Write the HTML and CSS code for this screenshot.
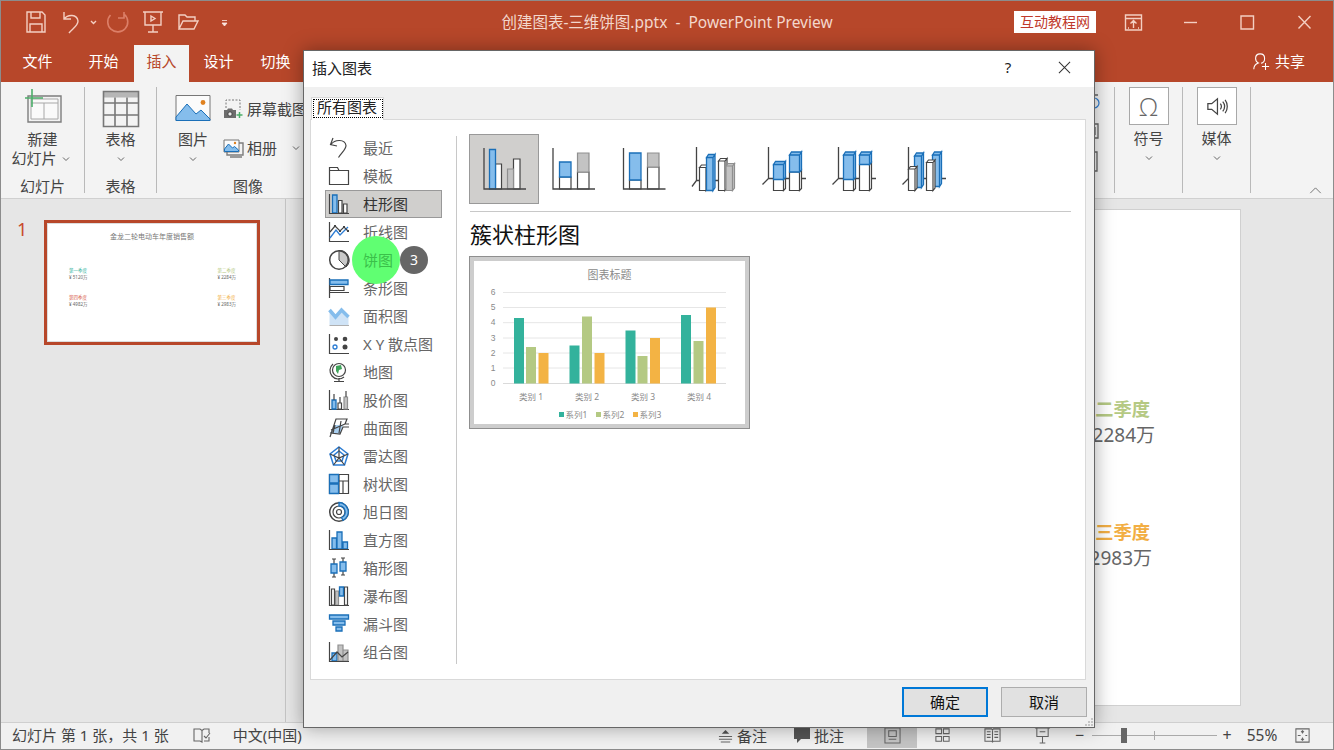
FILE: index.html
```html
<!DOCTYPE html>
<html lang="zh-CN">
<head>
<meta charset="utf-8">
<title>PowerPoint Preview</title>
<link rel="stylesheet" href="styles.css">
</head>
<body>
<div class="app">
  <header class="titlebar">
    <div class="qa">
      <svg class="qa-btn" viewBox="0 0 24 24"><path class="q" d="M3 2h15l3 3v17H3zM7 2v6h9V2M6 22v-8h12v8"/></svg>
      <svg class="qa-btn" viewBox="0 0 24 24"><path class="q" d="M5 2v7h7M5 9c4-5 13-5 14 2 0 5-6 8-9 12"/></svg>
      <svg class="qa-chev" viewBox="0 0 9 24"><path class="q" d="M2 11l2.500 2.500L7 11"/></svg>
      <svg class="qa-btn qa-gap" viewBox="0 0 24 24"><path class="q-dim" d="M18 2v6h-6M4.500 5a10 10 0 1 0 14-.5"/></svg>
      <svg class="qa-btn" viewBox="0 0 24 24"><path class="q" d="M2 2h20M4 2v13h16V2M12 15v7M7 22h10M10 6l4 2.500-4 2.500z"/></svg>
      <svg class="qa-btn" viewBox="0 0 24 24"><path class="q" d="M3 19V5h6l2 2h8v4M3 19l4-8h15l-4 8z"/></svg>
      <svg class="qa-cust" viewBox="0 0 37 24"><path class="q-fill" d="M16 10.500h5M16 13h5l-2.500 3z"/></svg>
    </div>
    <div class="doc-title">创建图表-三维饼图.pptx&nbsp; -&nbsp; PowerPoint Preview</div>
    <div class="win-right">
      <span class="badge">互动教程网</span>
      <svg class="win-btn" viewBox="0 0 57 24"><path class="q" d="M20.500 5h16v15h-16zM20.500 8.500h16M28.500 18v-7M25.500 13.500l3-3 3 3M24 18h-1M34 18h-1"/></svg>
      <svg class="win-btn" viewBox="0 0 57 24"><path class="q" d="M22 12.500h13"/></svg>
      <svg class="win-btn" viewBox="0 0 57 24"><path class="q" d="M22 6h12.500v13H22z"/></svg>
      <svg class="win-btn" viewBox="0 0 57 24"><path class="q" d="M22.500 6l12 12.500M34.500 6l-12 12.500"/></svg>
    </div>
  </header>

  <nav class="tabs">
    <span class="tab tab-file">文件</span>
    <span class="tab">开始</span>
    <span class="tab tab-on">插入</span>
    <span class="tab">设计</span>
    <span class="tab">切换</span>
    <span class="share">
      <svg class="share-ic" viewBox="0 0 20 20"><path class="w" d="M2 18c0-4 2-6 5-7-2-1-3-3-3-5 0-3 2-5 5-5s5 2 5 5-2 5-4 5.500M11 15h8M15 11v8"/></svg>
      共享
    </span>
  </nav>

  <section class="ribbon">
    <div class="group g-slide">
      <div class="g-body">
        <svg class="ic-new" viewBox="22 88 40 36">
          <path class="r-box" d="M27 96h33v26H27z"/>
          <path class="r-line" d="M30 99v20h27V99zM43 103v16M30 103h27"/>
          <path class="r-green" d="M24 98h18M31 89v18"/>
        </svg>
        <div class="g-txt">新建</div>
        <div class="g-txt g-txt-menu">幻灯片 <svg class="chev-in" viewBox="0 0 8 6"><path class="r-chev" d="M1 1.500l3 3 3-3"/></svg></div>
      </div>
      <div class="g-label">幻灯片</div>
    </div>
    <div class="group g-table">
      <div class="g-body">
        <svg class="ic-table" viewBox="102 90 38 38">
          <path class="r-head" d="M103.500 91.500h35v6h-35z"/>
          <path class="r-tbl" d="M103.500 91.500h35v35h-35zM103.500 103h35M103.500 115h35M115 97.500v29M127 97.500v29"/>
        </svg>
        <div class="g-txt">表格</div>
        <svg class="chev" viewBox="0 0 8 6"><path class="r-chev" d="M1 1.500l3 3 3-3"/></svg>
      </div>
      <div class="g-label">表格</div>
    </div>
    <div class="group g-image">
      <div class="g-body g-row">
        <div class="g-col">
          <svg class="ic-pic" viewBox="175 94 36 28">
            <path class="pic-bg" d="M176 95.500h34v25h-34z"/>
            <path class="pic-mt" d="M176 117l11-13 9 10 5-4 9 9v1.500h-34z"/>
            <circle class="pic-sun" cx="203" cy="102.500" r="2.400"/>
          </svg>
          <div class="g-txt">图片</div>
          <svg class="chev" viewBox="0 0 8 6"><path class="r-chev" d="M1 1.500l3 3 3-3"/></svg>
        </div>
        <div class="g-small">
          <div class="small-row">
            <svg class="ic-small" viewBox="0 0 20 20">
              <path class="r-dash" d="M3 9V1h14v10"/>
              <path class="cam" d="M1 11h3l1-1.500h4l1 1.500h3v8H1z"/>
              <circle class="cam-l" cx="7" cy="15" r="2.200"/>
              <path class="r-green2" d="M13.500 16h6M16.500 13v6"/>
            </svg>
            <span>屏幕截图</span>
          </div>
          <div class="small-row">
            <svg class="ic-small" viewBox="0 0 20 20">
              <path class="r-box" d="M4 17V5h16v12zM7 19h12"/>
              <path class="pic-bg" d="M1 2h15v12H1z"/>
              <path class="pic-mt" d="M1.500 11l4-5 4 4 2-1.500 4 3.500v1.500h-14z"/>
              <circle class="pic-sun" cx="12" cy="5" r="1.200"/>
            </svg>
            <span>相册</span>
            <svg class="chev-side" viewBox="0 0 8 6"><path class="r-chev" d="M1 1.500l3 3 3-3"/></svg>
          </div>
        </div>
      </div>
      <div class="g-label">图像</div>
    </div>
    <div class="ribbon-gap">
      <svg class="frag" viewBox="0 0 8 80">
        <circle class="frag-bl" cx="1" cy="13" r="5"/>
        <path class="frag-d" d="M-4 5h9M-4 34h9v14h-9M2 37v8M-4 62h8v19h-8"/>
      </svg>
    </div>
    <div class="group g-ins">
      <div class="g-body">
        <div class="big-box"><span class="omega">Ω</span></div>
        <div class="g-txt g-txt-box">符号</div>
        <svg class="chev" viewBox="0 0 8 6"><path class="r-chev" d="M1 1.500l3 3 3-3"/></svg>
      </div>
    </div>
    <div class="group g-ins">
      <div class="g-body">
        <div class="big-box">
          <svg class="ic-speaker" viewBox="0 0 24 24"><path class="spk" d="M3 9v6h4l6 5V4L7 9zM16 9c1.500 2 1.500 4 0 6M18.500 7c2.500 3 2.500 7 0 10M21 5c3 4 3 10 0 14"/></svg>
        </div>
        <div class="g-txt g-txt-box">媒体</div>
        <svg class="chev" viewBox="0 0 8 6"><path class="r-chev" d="M1 1.500l3 3 3-3"/></svg>
      </div>
    </div>
    <div class="ribbon-end">
      <svg class="collapse" viewBox="0 0 14 8"><path class="r-chev" d="M1 7l6-6 6 6"/></svg>
    </div>
  </section>

  <main class="work">
    <aside class="thumbs">
      <span class="thumb-no">1</span>
      <div class="thumb">
        <div class="t-title">金龙二轮电动车年度销售额</div>
        <div class="t-grid">
          <div class="t-item"><b class="c-teal">第一季度</b><span>¥ 5120万</span></div>
          <div class="t-item"><b class="c-green">第二季度</b><span>¥ 2284万</span></div>
          <div class="t-item"><b class="c-red">第四季度</b><span>¥ 4982万</span></div>
          <div class="t-item"><b class="c-orange">第三季度</b><span>¥ 2983万</span></div>
        </div>
      </div>
    </aside>
    <div class="stage">
      <div class="slide">
        <div class="s-item s-q2"><b class="c-green">第二季度</b><span>¥ 2284万</span></div>
        <div class="s-item s-q3"><b class="c-orange">第三季度</b><span>¥ 2983万</span></div>
      </div>
    </div>
  </main>

  <footer class="status">
    <span class="st-text">幻灯片 第 1 张，共 1 张</span>
    <svg class="st-book" viewBox="0 0 18 16"><path class="st" d="M1 2h6l2 1.500V15l-2-1H1zM9 3.500L11 2h5v4M11 14h5v-4M11 9l2 2 4-5"/></svg>
    <span class="st-text">中文(中国)</span>
    <div class="st-right">
      <span class="st-note">
        <svg class="st-ic" viewBox="0 0 16 16"><path class="st" d="M1 9h14M1 12h14M3 15h10"/><path class="st-f" d="M8 2l4 4H4z"/></svg>
        备注
      </span>
      <span class="st-note st-comment">
        <svg class="st-ic2" viewBox="0 0 18 16"><path class="st-f" d="M1 1h16v11H8l-4 4v-4H1z"/></svg>
        批注
      </span>
      <span class="st-view st-view-on"><svg class="st-vi" viewBox="0 0 18 18"><path class="st" d="M1 1h16v16H1zM5 4h8v6H5zM5 13h8"/></svg></span>
      <span class="st-view"><svg class="st-vi" viewBox="0 0 18 18"><path class="st" d="M2 2h6v5H2zM10 2h6v5h-6zM2 10h6v5H2zM10 10h6v5h-6z"/></svg></span>
      <span class="st-view"><svg class="st-vi" viewBox="0 0 18 18"><path class="st" d="M1 2h7l1 1 1-1h7v13h-7l-1 1-1-1H1zM9 3v12M3 5h4M3 8h4M3 11h4M11 5h4M11 8h4M11 11h4"/></svg></span>
      <span class="st-view"><svg class="st-vi" viewBox="0 0 18 18"><path class="st" d="M1 1h16M3 1v9h12V1M9 10v7M6 17h6M6 5h6"/></svg></span>
      <span class="st-zoom-btn">−</span>
      <span class="slider"><i class="slider-tick"></i><i class="slider-thumb"></i></span>
      <span class="st-zoom-btn st-plus">+</span>
      <span class="st-pct">55%</span>
      <span class="st-fit"><svg class="st-vi" viewBox="0 0 18 18"><path class="st" d="M2 2h14v14H2zM9 4v3M7.500 5.500L9 4l1.500 1.500M9 14v-3M7.500 12.500L9 14l1.500-1.500M4 9h3M12 9h2"/></svg></span>
    </div>
  </footer>
</div>

<div class="dialog">
  <div class="d-title">
    <span class="d-name">插入图表</span>
    <span class="d-help">?</span>
    <svg class="d-close" viewBox="0 0 14 14"><path class="d-x" d="M1 1l12 12M13 1L1 13"/></svg>
  </div>
  <div class="d-tabs"><div class="d-tab"><span class="d-focus">所有图表</span></div></div>
  <div class="d-panel">
    <ul class="list">
      <li class="li"><svg class="li-ic" viewBox="0 0 20 20"><path class="a" d="M4 0L1.500 6.500l6.500 1.500M2 6.500C6 1 16 1 17 7.500c0 4-4.500 7-7.500 12"/></svg><span>最近</span></li>
      <li class="li"><svg class="li-ic" viewBox="0 0 20 20"><path class="wh" d="M.5 1.500h8l1.500 3h9.500v14H.5zM.5 4.500H10"/></svg><span>模板</span></li>
      <li class="li li-on"><svg class="li-ic" viewBox="0 0 20 20"><path class="bl" d="M3.500 1h4.500v18H3.500z"/><path class="wh" d="M9.500 6.500h3.500V19H9.500zM14.500 10h3.500v9h-3.500z"/><path class="a" d="M.5 0v19.500H20"/></svg><span>柱形图</span></li>
      <li class="li"><svg class="li-ic" viewBox="0 0 20 20"><path class="a" d="M.5 0v19.500H20"/><path class="l-b" d="M1 16L7 8l4 5 8-8"/><path class="a" d="M1 10l5-6 5 5 4-4 4 4"/><path class="dot" d="M5 3h2v2H5zM10 8h2v2h-2zM14 4h2v2h-2zM18 8h2v2h-2z"/></svg><span>折线图</span></li>
      <li class="li"><svg class="li-ic" viewBox="0 0 20 20"><path class="pie" d="M10 10V.5A9.500 9.500 0 0 1 17 17z"/><circle class="a a-thick" cx="10" cy="10" r="9.300"/></svg><span>饼图</span></li>
      <li class="li"><svg class="li-ic" viewBox="0 0 20 20"><path class="a" d="M.5 0v20"/><path class="bl" d="M1 2h18v4.500H1z"/><path class="wh-n" d="M1 8.500h14v4H1zM1 14.500h19"/></svg><span>条形图</span></li>
      <li class="li"><svg class="li-ic" viewBox="0 0 20 20"><path class="area" d="M.5 4l6 7 6-7 7 7v8H.5z"/><path class="area-band" d="M.5 4l6 7 6-7 7 7"/><path class="area-top" d="M.5 19.500H20"/></svg><span>面积图</span></li>
      <li class="li"><svg class="li-ic" viewBox="0 0 20 20"><path class="a" d="M.5 0v19.500H20"/><circle class="dot" cx="7" cy="5" r="2"/><circle class="dot" cx="16" cy="5" r="2.300"/><circle class="dot" cx="16" cy="13" r="2.500"/><circle class="dot-b" cx="6" cy="13" r="2"/></svg><span>X Y 散点图</span></li>
      <li class="li"><svg class="li-ic" viewBox="0 0 20 20"><circle class="globe" cx="10" cy="8" r="6.500"/><path class="land" d="M7 4l5-1 1 4-3 1-1 4-2-3z"/><path class="a" d="M4 2a8.500 8.500 0 0 0 11 13M10 16v3M5 19.500h10"/></svg><span>地图</span></li>
      <li class="li"><svg class="li-ic" viewBox="0 0 20 20"><path class="a" d="M.5 0v19.500H20"/><path class="bl" d="M3 10h4v9H3z"/><path class="wh" d="M9 13h3.500v6H9z"/><path class="gr" d="M15 7h3.500v12H15z"/><path class="a" d="M5 4v6M11 7v6M17 1v6"/></svg><span>股价图</span></li>
      <li class="li"><svg class="li-ic" viewBox="0 0 20 20"><path class="area-solid" d="M1 15L6 7h8l-3 9z"/><path class="a" d="M1 19L7 1h11l-2 5h4M2 12l14-6M6 7l-2 8M12 3l-2 12M1 15l10 1 3-7h6"/></svg><span>曲面图</span></li>
      <li class="li"><svg class="li-ic" viewBox="0 0 20 20"><path class="l-b2" d="M10 1l9 7-3.500 11h-11L1 8zM10 5l5 4-2 6H7L5 9z"/><path class="a" d="M10 1v11M1 8l9 4 9-4M4.500 19l5.500-7 5.500 7"/></svg><span>雷达图</span></li>
      <li class="li"><svg class="li-ic" viewBox="0 0 20 20"><path class="a" d="M.5.500h19v19H.5zM10 .5v19M10 7h9.500M14 7v12.500"/><path class="bl" d="M.5.500H9.500V9H.5zM.5 10H9.500v9.500H.5z"/></svg><span>树状图</span></li>
      <li class="li"><svg class="li-ic" viewBox="0 0 20 20"><circle class="a a-thick" cx="10" cy="10" r="9.300"/><circle class="a" cx="10" cy="10" r="6"/><path class="bl" d="M10 .5A9.500 9.500 0 0 1 14 18.500l-1.500-3A6 6 0 0 0 10 4z"/><circle class="a" cx="10" cy="10" r="2.500"/></svg><span>旭日图</span></li>
      <li class="li"><svg class="li-ic" viewBox="0 0 20 20"><path class="bl" d="M3 8h4.500v11H3zM8 2h5v17H8zM14 12h4.500v7H14z"/><path class="a" d="M.5 0v19.500H20"/></svg><span>直方图</span></li>
      <li class="li"><svg class="li-ic" viewBox="0 0 20 20"><path class="a" d="M5 1v5M5 15v4M3 1h4M3 19h4M14 0v4M14 13v4M12 0h4M12 17h4"/><path class="bl" d="M2 6h6v9H2zM11 4h6v9h-6z"/></svg><span>箱形图</span></li>
      <li class="li"><svg class="li-ic" viewBox="0 0 20 20"><path class="wh" d="M2.500 3h3v16h-3zM15.500 1h3v18h-3z"/><path class="gr" d="M6.500 5h3v14h-3z"/><path class="bl" d="M10.500 1h4v9h-4z"/><path class="a" d="M.5 0v19.500H20"/></svg><span>瀑布图</span></li>
      <li class="li"><svg class="li-ic" viewBox="0 0 20 20"><path class="bl" d="M.5 1h19v4H.5zM4 7h12v4H4zM7 13h6v4H7z"/></svg><span>漏斗图</span></li>
      <li class="li"><svg class="li-ic" viewBox="0 0 20 20"><path class="bl" d="M3 11h5v8H3z"/><path class="gr" d="M9 3h5v16H9zM14 8h5v11h-5z"/><path class="a" d="M.5 0v19.500H20M1 18l7-8 5 5 6-5"/></svg><span>组合图</span></li>
    </ul>
    <div class="d-sep"></div>
    <div class="d-right">
      <div class="types">
        <svg class="type type-on" viewBox="0 0 70 70">
          <path class="wh" d="M26.500 30h6v25h-6zM44.500 25h6.500v30h-6.500z"/><path class="bl" d="M20.500 15.500h6V55h-6z"/><path class="gr" d="M38.500 35h6v20h-6z"/>
          <path class="axis" d="M15 14v41h42"/>
        </svg>
        <svg class="type" viewBox="0 0 70 70">
          <path class="wh" d="M20.500 43h11.500v12H20.500zM38.500 38h11.500v17H38.500z"/><path class="bl" d="M20.500 28h11.500v15H20.500z"/><path class="gr" d="M38.500 19h11.500v19H38.500z"/>
          <path class="axis" d="M14 14v41h42"/>
        </svg>
        <svg class="type" viewBox="0 0 70 70">
          <path class="wh" d="M20.500 46h11.500v9H20.500zM38.500 33h11.500v22H38.500z"/><path class="bl" d="M20.500 19h11.500v27H20.500z"/><path class="gr" d="M38.500 19h11.500v14H38.500z"/>
          <path class="axis" d="M14.500 14v41h42"/>
        </svg>
        <svg class="type" viewBox="0 0 70 70">
          <path class="axis" d="M17.500 13v33.500L13 52.500M17.500 46.500H56"/>
          <path class="wh" d="M20.500 33.500h6.500v23h-6.500zM20.500 33.500l2-2.500h6.500l-2 2.500zM27 33.500l2-2.500v23l-2 2.500z"/>
          <path class="bl" d="M27.500 23.500h6.500v33h-6.500zM27.500 23.500l2-3h6.500l-2 3zM34 23.500l2-3v33l-2 3z"/>
          <path class="wh" d="M39.500 27h6.500v29.500h-6.500zM39.500 27l2-2.500h6.500l-2 2.500zM46 27l2-2.500V54l-2 2.500z"/>
          <path class="gr" d="M47 32h6.500v24.500H47zM47 32l2-2.500h6.500l-2 2.500zM53.500 32l2-2.500V54l-2 2.500z"/>
        </svg>
        <svg class="type" viewBox="0 0 70 70">
          <path class="axis" d="M19.500 13v31.500L13.500 50.500M19.500 44.500H57"/>
          <path class="wh" d="M24.500 45.500h10v11h-10zM34.500 45.500l2-2v11l-2 2z"/>
          <path class="bl" d="M24.500 30.500h10v15h-10zM24.500 30.500l2-3h10l-2 3zM34.500 30.500l2-3v16l-2 2z"/>
          <path class="wh" d="M40.500 38h10v18.500h-10zM50.500 38l2-2v18.500l-2 2z"/>
          <path class="bl" d="M40.500 21h10v17h-10zM40.500 21l2-3h10l-2 3zM50.500 21l2-3v18l-2 2z"/>
        </svg>
        <svg class="type" viewBox="0 0 70 70">
          <path class="axis" d="M19.500 13v31.500L13.500 50.500M19.500 44.500H57"/>
          <path class="wh" d="M24.500 45.500h10v11h-10zM34.500 45.500l2-2v11l-2 2z"/>
          <path class="bl" d="M24.500 21h10v24.500h-10zM24.500 21l2-3h10l-2 3zM34.500 21l2-3v25.500l-2 2z"/>
          <path class="wh" d="M40.500 30.500h10v26h-10zM50.500 30.500l2-2v26l-2 2z"/>
          <path class="bl" d="M40.500 21h10v9.500h-10zM40.500 21l2-3h10l-2 3zM50.500 21l2-3v10.500l-2 2z"/>
        </svg>
        <svg class="type" viewBox="0 0 70 70">
          <path class="axis" d="M19.500 13v31.500L13.500 50.500M19.500 44.500H57"/>
          <path class="bl" d="M25.500 22h7v31.500h-7zM25.500 22l2-3h7l-2 3zM32.500 22l2-3v31.500l-2 3z"/>
          <path class="bl" d="M43.500 21h7v31.500h-7zM43.500 21l2-3h7l-2 3zM50.500 21l2-3v31.500l-2 3z"/>
          <path class="wh" d="M19.500 35h6.500v21.500h-6.500zM19.500 35l2-2.500H28l-2 2.500zM26 35l2-2.500V54l-2 2.500z"/>
          <path class="wh" d="M37.500 28.500h6.500v28h-6.500zM37.500 28.500l2-2.500h6.500l-2 2.500zM44 28.500l2-2.500V54l-2 2.500z"/>
        </svg>
      </div>
      <div class="d-rule"></div>
      <h2 class="d-head">簇状柱形图</h2>
      <div class="preview">
        <svg class="chart" viewBox="474 261 271 163">
          <text class="ch-title" x="609.500" y="279">图表标题</text>
          <path class="grid" d="M503 292.500h223M503 307.500h223M503 322.700h223M503 338h223M503 353h223M503 368h223"/>
          <path class="grid-b" d="M503 383.500h223"/>
          <path class="b1" d="M514 318h10v65.500h-10zM569.500 345.500h10v38h-10zM625.500 330.500h10v53h-10zM681 315h10v68.500h-10z"/>
          <path class="b2" d="M526 347h10v36.500h-10zM582 316.500h10v67h-10zM637.500 356h10v27.500h-10zM693.500 341h10v42.500h-10z"/>
          <path class="b3" d="M538.500 353h10v30.500h-10zM594.500 353h10v30.500h-10zM650 338h10v45.500h-10zM706 307.500h10v76h-10z"/>
          <text class="ch-num" x="493" y="295">6</text>
          <text class="ch-num" x="493" y="310">5</text>
          <text class="ch-num" x="493" y="325">4</text>
          <text class="ch-num" x="493" y="340.500">3</text>
          <text class="ch-num" x="493" y="355.500">2</text>
          <text class="ch-num" x="493" y="370.500">1</text>
          <text class="ch-num" x="493" y="386">0</text>
          <text class="ch-cat" x="531" y="400">类别 1</text>
          <text class="ch-cat" x="587" y="400">类别 2</text>
          <text class="ch-cat" x="643" y="400">类别 3</text>
          <text class="ch-cat" x="699" y="400">类别 4</text>
          <rect class="b1" x="559" y="412" width="5" height="5"/>
          <text class="ch-leg" x="565.500" y="418">系列1</text>
          <rect class="b2" x="596" y="412" width="5" height="5"/>
          <text class="ch-leg" x="602.500" y="418">系列2</text>
          <rect class="b3" x="633" y="412" width="5" height="5"/>
          <text class="ch-leg" x="639.500" y="418">系列3</text>
        </svg>
      </div>
    </div>
  </div>
  <div class="d-foot">
    <button class="btn btn-pri">确定</button>
    <button class="btn">取消</button>
  </div>
  <svg class="grip" viewBox="0 0 10 10"><path class="grip-d" d="M7 1h2v2H7zM4 4h2v2H4zM7 4h2v2H7zM1 7h2v2H1zM4 7h2v2H4zM7 7h2v2H7z"/></svg>
  <div class="spot"></div>
  <div class="step">3</div>
</div>
</body>
</html>
```
FILE: styles.css
```css
* { box-sizing: border-box; }
html, body { margin: 0; padding: 0; }
body {
  width: 1334px;
  height: 750px;
  overflow: hidden;
  font-family: "Noto Sans", "Noto Sans CJK SC", sans-serif;
  font-size: 15px;
  color: #444;
  background: #e6e6e6;
}
svg { display: block; overflow: visible; }
.app {
  width: 1334px;
  height: 750px;
  display: flex;
  flex-direction: column;
  border: 1px solid #8c8c8c;
}

/* title bar */
.titlebar {
  height: 44px;
  flex: none;
  display: grid;
  grid-template-columns: 1fr auto 1fr;
  align-items: center;
  padding-bottom: 3px;
  background: #b7472a;
}
.qa { display: flex; align-items: center; padding-left: 17.5px; }
.qa-btn { width: 24px; height: 24px; margin: 0 5.5px; }
.qa-chev { width: 9px; height: 24px; }
.qa-gap { margin-left: 8.5px; }
.qa-cust { width: 37px; height: 24px; }
.q { fill: none; stroke: #f4cfc2; stroke-width: 1.4; }
.q-dim { fill: none; stroke: #dc7f68; stroke-width: 1.6; }
.q-fill { fill: #fbe6df; stroke: #fbe6df; stroke-width: .8; }
.doc-title { color: #f3d7cd; font-size: 15.500px; line-height: 22px; white-space: nowrap; }
.win-right { display: flex; justify-content: flex-end; align-items: center; }
.badge {
  background: #fff;
  color: #c0392b;
  font-size: 14px;
  line-height: 22px;
  height: 22px;
  width: 82px;
  text-align: center;
  margin-right: 9px;
}
.win-btn { width: 57px; height: 24px; }

/* tabs */
.tabs {
  height: 37px;
  flex: none;
  display: flex;
  gap: 2px;
  padding-left: 9px;
  background: #b7472a;
  color: #fff;
  line-height: 33px;
}
.tab { width: 55px; text-align: center; }
.tab-file { margin-right: 9px; }
.tab-on { background: #f3f3f3; color: #b7472a; margin-left: 1px; }
.share { margin-left: auto; display: flex; align-items: center; gap: 5px; padding: 0 28px 4px 0; }
.share-ic { width: 18px; height: 18px; }
.w { fill: none; stroke: #fff; stroke-width: 1.2; }

/* ribbon */
.ribbon {
  height: 117px;
  flex: none;
  display: flex;
  padding-top: 5px;
  background: #f3f3f3;
  border-bottom: 1px solid #d0d0d0;
  color: #444;
}
.group {
  height: 106px;
  display: flex;
  flex-direction: column;
  border-right: 1px solid #b9b9b9;
}
.g-slide { width: 84px; }
.g-table { width: 72px; }
.g-image { width: 183px; }
.g-ins { width: 68px; }
.g-body { flex: 1; display: flex; flex-direction: column; align-items: center; min-height: 0; }
.g-row { flex-direction: row; align-items: flex-start; }
.g-col { width: 72px; display: flex; flex-direction: column; align-items: center; }
.g-label { height: 14px; line-height: 14px; text-align: center; flex: none; }
.g-txt { line-height: 19px; height: 19px; display: flex; align-items: center; gap: 3px; white-space: nowrap; }
.g-txt-menu { margin-left: -4px; }
.ic-new { width: 40px; height: 36px; margin: 1px 0 6px; }
.ic-table { width: 38px; height: 38px; margin: 3px 0 2px; }
.ic-pic { width: 36px; height: 28px; margin: 7px 0 8px; }
.chev { width: 8px; height: 6px; margin-top: 7px; }
.chev-in { width: 8px; height: 6px; margin-left: 2px; }
.chev-side { width: 8px; height: 6px; margin-left: 11px; }
.r-box { fill: none; stroke: #7d7d7d; stroke-width: 1.4; }
.r-tbl { fill: none; stroke: #777; stroke-width: 1.6; }
.r-line { fill: #fafafa; stroke: #a8a8a8; stroke-width: 1; }
.r-green { fill: none; stroke: #4caf6a; stroke-width: 1.6; }
.r-green2 { fill: none; stroke: #4caf6a; stroke-width: 1.5; }
.r-head { fill: #b6b6b6; }
.r-chev { fill: none; stroke: #666; stroke-width: 1; }
.r-dash { fill: none; stroke: #777; stroke-width: 1; stroke-dasharray: 2 1.500; }
.pic-bg { fill: #fbfbfb; stroke: #777; stroke-width: 1; }
.pic-mt { fill: #85bdec; stroke: #1a6fb8; stroke-width: 1; }
.pic-sun { fill: #e0811e; }
.cam { fill: #6d6d6d; }
.cam-l { fill: #eee; stroke: #444; stroke-width: 1; }
.g-small { display: flex; flex-direction: column; margin-left: -6px; padding-top: 12px; gap: 19px; }
.small-row { display: flex; align-items: center; gap: 4px; line-height: 20px; height: 20px; white-space: nowrap; }
.ic-small { width: 20px; height: 20px; }
.ribbon-gap { flex: 1; border-right: 1px solid #b9b9b9; height: 106px; display: flex; justify-content: flex-end; padding-top: 3px; padding-right: 13px; }
.frag { width: 8px; height: 80px; }
.frag-bl { fill: none; stroke: #2b7cd3; stroke-width: 1.2; }
.frag-d { fill: none; stroke: #666; stroke-width: 1.3; }
.big-box {
  width: 40px;
  height: 38px;
  background: #fff;
  border: 1px solid #a8a8a8;
  display: flex;
  align-items: center;
  justify-content: center;
}
.omega { font-size: 25px; line-height: 30px; font-weight: 300; color: #666; font-family: "Open Sans", sans-serif; }
.ic-speaker { width: 23px; height: 23px; }
.spk { fill: none; stroke: #444; stroke-width: 1.3; }
.g-txt-box { margin-top: 4px; }
.g-ins .chev { margin-top: 7px; }
.ribbon-end { flex: none; width: 82px; height: 111px; display: flex; align-items: flex-end; justify-content: flex-end; padding: 0 11px 4px 0; }
.collapse { width: 13px; height: 7px; }

/* workspace */
.work { flex: 1; min-height: 0; display: flex; }
.thumbs {
  width: 285px;
  flex: none;
  display: flex;
  align-items: flex-start;
  padding: 21px 0 0 16px;
  gap: 19px;
  border-right: 1px solid #c4c4c4;
}
.thumb-no { width: 8px; color: #c8492c; font-size: 18px; line-height: 18px; }
.thumb {
  width: 216px;
  height: 125px;
  background: #fff;
  border: 3px solid #b7472a;
  padding: 9px 0 0;
  box-shadow: inset 0 0 0 1px #ddd;
}
.t-title { text-align: center; font-size: 7px; line-height: 10px; color: #777; }
.t-grid {
  display: grid;
  grid-template-columns: auto auto;
  justify-content: space-between;
  row-gap: 13px;
  margin-top: 25px;
  padding: 0 21px 0 22px;
}
.t-item { display: flex; flex-direction: column; font-size: 4.500px; line-height: 7px; color: #666; gap: 0; }
.t-item b { font-weight: 400; }
.c-teal { color: #34b39d; }
.c-green { color: #b5c983; }
.c-red { color: #d9604c; }
.c-orange { color: #f2ae43; }
.stage { flex: 1; min-width: 0; padding: 10px 92px 16px 71px; }
.slide {
  position: relative;
  height: 497px;
  background: #fff;
  border: 1px solid #d0d0d0;
}
.s-item {
  position: absolute;
  right: 85px;
  display: flex;
  flex-direction: column;
  align-items: flex-end;
  gap: 2px;
  font-size: 19px;
  line-height: 24px;
  color: #666;
  white-space: nowrap;
}
.s-item b { margin-right: 5px; font-size: 18.300px; }
.s-q2 { top: 187px; }
.s-q3 { top: 310px; right: 88px; }
.s-q3 b { margin-right: 2px; }

/* status bar */
.status {
  height: 27px;
  flex: none;
  display: flex;
  align-items: center;
  padding: 0 0 2px 11px;
  background: #f1f1f1;
  border-top: 1px solid #cfcfcf;
  font-size: 15px;
  color: #444;
}
.st-text { white-space: nowrap; line-height: 20px; }
.st-book { width: 18px; height: 16px; margin: 0 22px 0 24px; }
.st { fill: none; stroke: #666; stroke-width: 1.1; }
.st-f { fill: #555; }
.st-right { margin-left: auto; display: flex; align-items: center; height: 27px; margin-bottom: -2px; padding: 0 16px 2px 0; }
.st-note { width: 75px; display: flex; align-items: center; gap: 4px; white-space: nowrap; }
.st-comment { width: 74px; gap: 3px; }
.st-ic { width: 15px; height: 15px; }
.st-ic2 { width: 18px; height: 16px; }
.st-view { width: 50px; height: 25px; display: flex; align-items: center; justify-content: center; }
.st-view-on { background: #c4c4c4; }
.st-vi { width: 17px; height: 17px; }
.st-zoom-btn { width: 25px; text-align: center; font-size: 16px; }
.st-plus { width: 20px; }
.slider { position: relative; width: 125px; height: 1px; background: #aaa; }
.slider-tick { position: absolute; left: 62px; top: -4px; width: 1px; height: 9px; background: #aaa; }
.slider-thumb { position: absolute; left: 29px; top: -7px; width: 6px; height: 15px; background: #666; }
.st-pct { width: 50px; text-align: center; font-size: 15.500px; }
.st-fit { width: 30px; display: flex; justify-content: center; }

/* dialog */
.dialog {
  position: absolute;
  left: 303px;
  top: 50px;
  width: 792px;
  height: 678px;
  background: #f0f0f0;
  border: 1px solid #666;
  box-shadow: 0 0 18px rgba(0, 0, 0, .35);
  display: flex;
  flex-direction: column;
  color: #333;
}
.d-title { height: 36px; flex: none; background: #fff; display: flex; align-items: center; padding: 0 0 4px 8px; }
.d-name { font-size: 15px; color: #222; flex: 1; }
.d-help { width: 12px; text-align: center; margin-right: 44px; font-size: 15px; color: #222; }
.d-close { width: 13px; height: 13px; margin-right: 23px; }
.d-x { fill: none; stroke: #333; stroke-width: 1.1; }
.d-tabs { flex: none; height: 22px; margin-top: 10px; padding-left: 7px; display: flex; }
.d-tab { width: 73px; height: 23px; background: #fff; border: 1px solid #d9d9d9; border-bottom: 0; padding: 1px 0 0 1px; position: relative; z-index: 1; }
.d-focus { display: block; width: 70px; height: 19px; line-height: 17px; text-align: center; text-indent: -2px; outline: 1px dotted #000; outline-offset: -1px; color: #222; }
.d-panel {
  width: 776px;
  height: 561px;
  flex: none;
  margin-left: 6px;
  background: #fff;
  border: 1px solid #d9d9d9;
  display: flex;
}
.list { list-style: none; margin: 0; padding: 14px 0 0 14px; width: 145px; flex: none; }
.li {
  width: 117px;
  height: 28px;
  display: flex;
  align-items: center;
  gap: 14px;
  padding-left: 4px;
  color: #666;
  white-space: nowrap;
  line-height: 26px;
}
.li:nth-child(5) span { position: relative; z-index: 3; color: #3bc04a; }
.li-on { background: #d0cfcd; outline: 1px solid #999; outline-offset: -1px; color: #333; }
.li-ic { width: 20px; height: 20px; flex: none; }
.a { fill: none; stroke: #444; stroke-width: 1.2; }
.a-thick { stroke-width: 1.5; }
.bl { fill: #85bdec; stroke: #1a6fb8; stroke-width: 1.3; }
.wh { fill: #fff; stroke: #444; stroke-width: 1.2; }
.wh-n { fill: none; stroke: #444; stroke-width: 1.2; }
.gr { fill: #c3c3c3; stroke: #8f8f8f; stroke-width: 1.2; }
.axis { fill: none; stroke: #444; stroke-width: 1.3; }
.l-b { fill: none; stroke: #2b7cd3; stroke-width: 1.3; }
.l-b2 { fill: none; stroke: #2b7cd3; stroke-width: 1.5; }
.pie { fill: #c9c9c9; stroke: #444; stroke-width: 1; }
.area { fill: #cfe3f6; }
.area-solid { fill: #a9cff0; }
.area-band { fill: none; stroke: #85bdec; stroke-width: 3.500; }
.area-top { fill: none; stroke: #9a9a9a; stroke-width: .8; }
.dot { fill: #444; }
.dot-b { fill: #fff; stroke: #2b7cd3; stroke-width: 1.3; }
.globe { fill: #fff; stroke: #444; stroke-width: 1.2; }
.land { fill: #3fa45b; }
.d-sep { width: 1px; flex: none; margin: 16px 12px 15px 0; background: #c8c8c8; }
.d-right { flex: 1; min-width: 0; padding: 14px 14px 0 0; display: flex; flex-direction: column; }
.types { display: flex; }
.type { width: 70px; height: 70px; flex: none; }
.type-on { background: #d0cfcd; outline: 1px solid #999; outline-offset: -1px; }
.d-rule { height: 1px; margin: 7px 0 0 1px; background: #c8c8c8; }
.d-head { margin: 7px 0 7px 1px; font-size: 22px; font-weight: 400; line-height: 30px; height: 30px; color: #111; }
.preview {
  width: 281px;
  height: 173px;
  border: 1px solid #8f8f8f;
  background: #fff;
  outline: 4px solid #cdcdcd;
  outline-offset: -5px;
  padding: 4px;
}
.chart { width: 271px; height: 163px; }
.ch-title { font-size: 11px; fill: #8a8a8a; text-anchor: middle; }
.ch-num { font-size: 8.500px; fill: #8a8a8a; text-anchor: middle; font-family: "Liberation Sans", sans-serif; }
.ch-cat { font-size: 8.500px; fill: #8a8a8a; text-anchor: middle; }
.ch-leg { font-size: 8.500px; fill: #8a8a8a; }
.grid { fill: none; stroke: #e6e6e6; stroke-width: 1; }
.grid-b { fill: none; stroke: #dadada; stroke-width: 1; }
.b1 { fill: #33b29c; }
.b2 { fill: #b4c983; }
.b3 { fill: #f3b344; }
.d-foot { flex: 1; display: flex; justify-content: flex-end; gap: 13px; padding: 7px 7px 0 0; }
.btn {
  width: 86px;
  height: 30px;
  padding: 0;
  background: #e1e1e1;
  border: 1px solid #adadad;
  font: inherit;
  color: #111;
  line-height: 26px;
}
.btn-pri { border: 2px solid #0078d7; }
.grip { position: absolute; right: 0; bottom: 0; width: 10px; height: 10px; }
.grip-d { fill: #c4c4c4; }
.spot {
  position: absolute;
  left: 48px;
  top: 185px;
  width: 48px;
  height: 48px;
  border-radius: 50%;
  background: #60ff72;
  z-index: 2;
}
.step {
  position: absolute;
  left: 96px;
  top: 195px;
  width: 28px;
  height: 28px;
  border-radius: 50%;
  background: #666;
  color: #fff;
  font-size: 14px;
  line-height: 28px;
  text-align: center;
  z-index: 2;
}
```
